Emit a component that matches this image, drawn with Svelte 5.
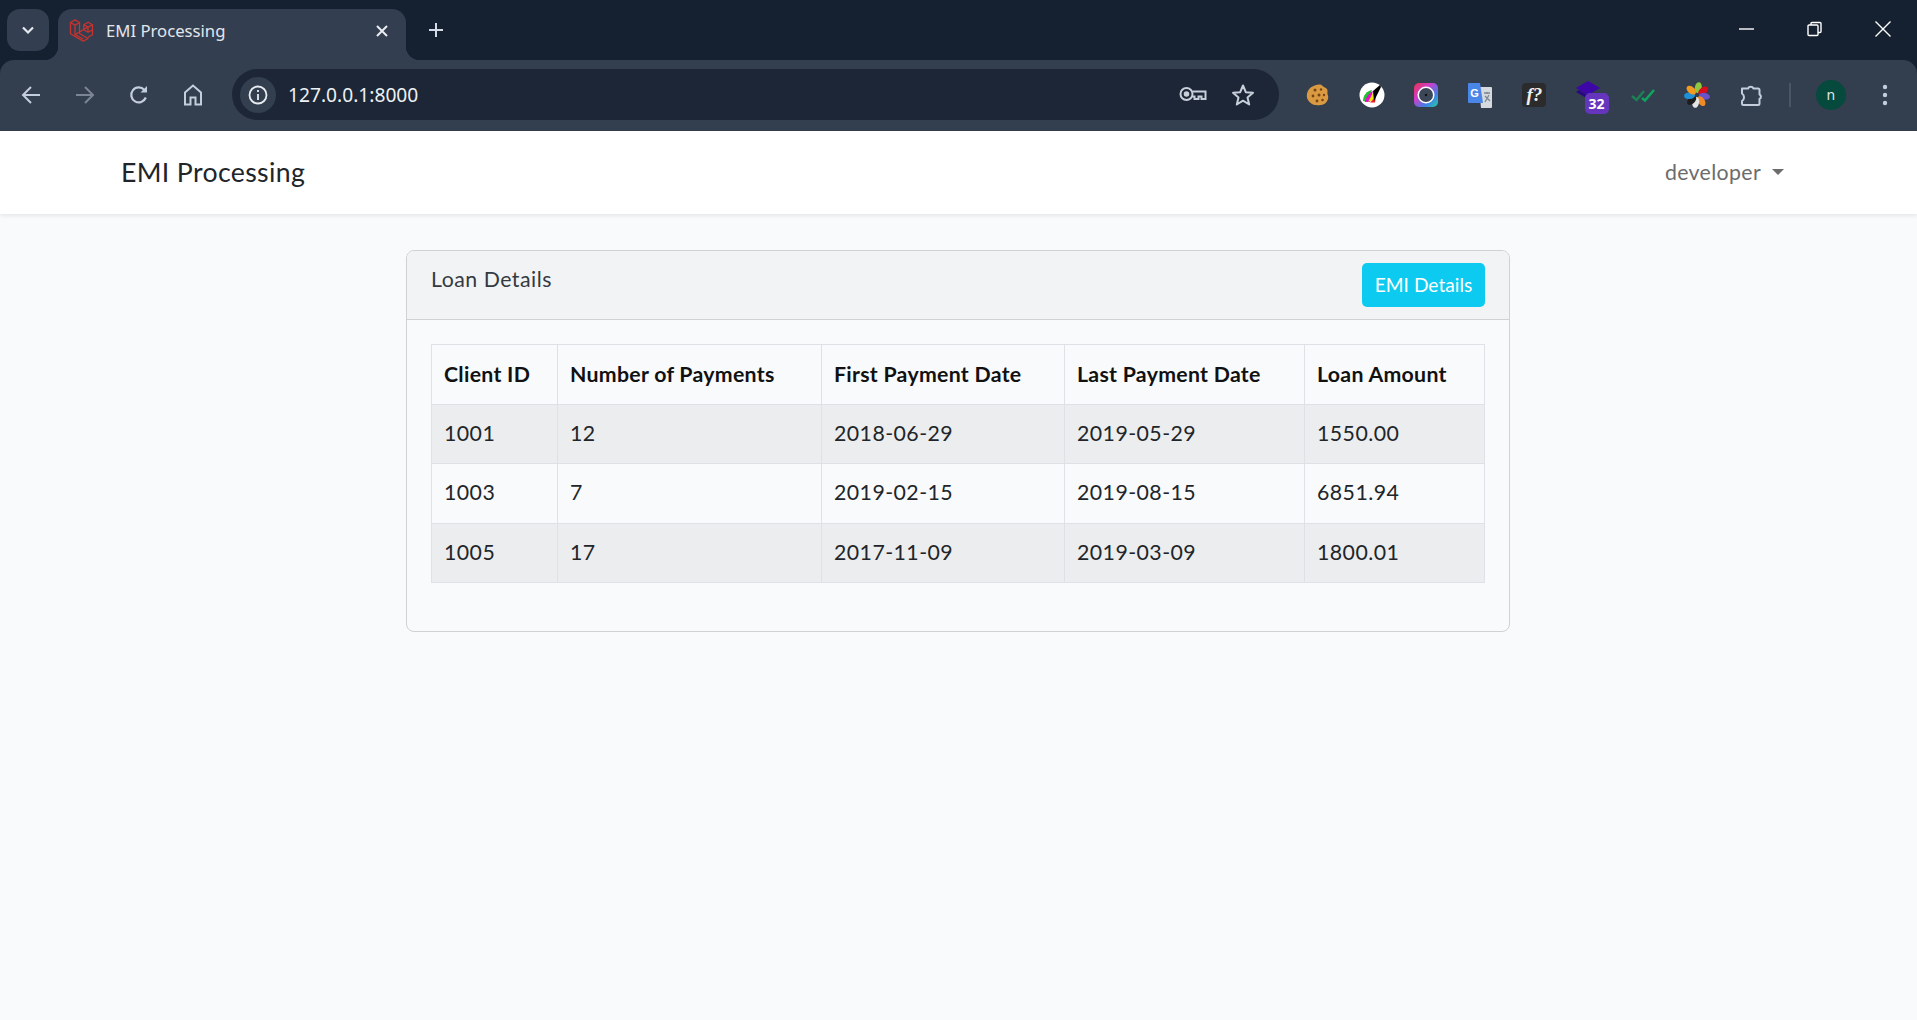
<script>
  let columns = ["Client ID", "Number of Payments", "First Payment Date", "Last Payment Date", "Loan Amount"]
  let loans = [
    ["1001", "12", "2018-06-29", "2019-05-29", "1550.00"],
    ["1003", "7", "2019-02-15", "2019-08-15", "6851.94"],
    ["1005", "17", "2017-11-09", "2019-03-09", "1800.01"]
  ]
</script>

<div class="page">
  <div class="browser">
    <div class="tabstrip">
      <button class="tabsearch" aria-label="Search tabs">
        <svg width="16" height="16" viewBox="0 0 16 16"><path d="M3 5.500l5 5 5-5" fill="none" stroke="#e6eaf0" stroke-width="2.200"/></svg>
      </button>
      <div class="tab">
        <svg class="favicon" width="26" height="26" viewBox="0 0 26 26" fill="none" stroke="#c8332e" stroke-width="1.300" stroke-linejoin="round">
          <path d="M1.500 5.500l4.500-2.600 4.500 2.600v11l8.500 5-4.700 2.700-8.300-4.800-4.500-2.600z"/>
          <path d="M1.500 5.500l4.500 2.600 4.500-2.600M6 8.100v9.400l8.300 4.800M6 17.500l8.800-5 4.200-2.400"/>
          <path d="M14.800 7.700l4.300-2.500 4.400 2.500v5l-4.500 2.500-4.200-2.400zM14.800 7.700l4.200 2.400 4.500-2.400M19 10.100v5.100M23.500 12.700v5l-4.500 2.600"/>
        </svg>
        <span class="tabtitle">EMI Processing</span>
        <svg class="tabclose" width="14" height="14" viewBox="0 0 14 14"><path d="M2 2l10 10M12 2L2 12" stroke="#e9edf2" stroke-width="2"/></svg>
      </div>
      <svg class="newtab" width="16" height="16" viewBox="0 0 16 16"><path d="M8 1v14M1 8h14" stroke="#d5dbe4" stroke-width="2"/></svg>
      <div class="winctl">
        <svg width="16" height="16" viewBox="0 0 16 16"><path d="M0 8h15" stroke="#fff" stroke-width="1.400"/></svg>
        <svg width="16" height="16" viewBox="0 0 16 16" fill="none" stroke="#fff" stroke-width="1.400"><rect x="1" y="4" width="10" height="10.500" rx="1"/><path d="M4 4V2.500q0-1 1-1h8q1 0 1 1v8q0 1-1 1h-2"/></svg>
        <svg width="16" height="16" viewBox="0 0 16 16"><path d="M.5.5l15 15M15.500.5l-15 15" stroke="#fff" stroke-width="1.400"/></svg>
      </div>
    </div>

    <div class="toolbar">
      <div class="navbtns">
        <svg width="20" height="20" viewBox="0 0 20 20" fill="none" stroke="#c3cddb" stroke-width="2"><path d="M19 10H2M10 2l-8 8 8 8"/></svg>
        <svg width="20" height="20" viewBox="0 0 20 20" fill="none" stroke="#7b8593" stroke-width="2"><path d="M1 10h17M10 2l8 8-8 8"/></svg>
        <svg width="20" height="20" viewBox="0 0 20 20" fill="none" stroke="#c3cddb" stroke-width="2.200"><path d="M16.800 12.500a7.500 7.500 0 1 1-1.400-7.600"/><path d="M18 1v6.500h-6.500z" fill="#c3cddb" stroke="none"/></svg>
        <svg width="20" height="22" viewBox="0 0 20 22" fill="none" stroke="#c3cddb" stroke-width="2"><path d="M2 20.500V8.500L10 1.500l8 7v12h-5.500v-7h-5v7z"/></svg>
      </div>
      <div class="omnibox">
        <div class="siteinfo">
          <svg width="20" height="20" viewBox="0 0 20 20" fill="none" stroke="#e8ecf1" stroke-width="1.800"><circle cx="10" cy="10" r="8.500"/><path d="M10 9v6M10 5v2"/></svg>
        </div>
        <span class="url">127.0.0.1:8000</span>
        <svg class="key" width="28" height="18" viewBox="0 0 28 18" fill="none" stroke="#c7cfda" stroke-width="2"><circle cx="7.500" cy="8" r="6"/><circle cx="7.500" cy="8" r="1.800" fill="#c7cfda"/><path d="M13.500 5.500H26.500v7.500h-4v-2.500h-3V13h-4v-2.500h-2"/></svg>
        <svg class="star" width="24" height="24" viewBox="0 0 24 24" fill="none" stroke="#c7cfda" stroke-width="2" stroke-linejoin="round"><path d="M12 2.500l2.800 6.700 7.200.6-5.500 4.700 1.700 7-6.200-3.800-6.200 3.800 1.700-7L2 9.800l7.200-.6z"/></svg>
      </div>

      <div class="extensions">
        <svg width="24" height="24" viewBox="0 0 24 24"><path d="M13 1.500c3-.5 3 1.500 5 2.500s4 2 3.500 5 1.500 4 .5 7-3 5.500-7 6-8 .5-11-2.500S0 13.500 1.500 9 8 2 13 1.500z" fill="#d99a42"/><g fill="#7a4314"><circle cx="9" cy="7" r="1.500"/><circle cx="15" cy="6.500" r="1.200"/><circle cx="7" cy="13" r="1.400"/><circle cx="13" cy="12" r="1.500"/><circle cx="18" cy="12" r="1.200"/><circle cx="11" cy="18" r="1.400"/><circle cx="16.500" cy="17" r="1.300"/></g></svg>
        <svg width="26" height="26" viewBox="0 0 26 26"><circle cx="13" cy="13" r="12.500" fill="#fff"/><path d="M4 19c0-6 4-10 9-11l-5 12z" fill="#1fc12e"/><path d="M6 20c1-5 4-9 8-11l-3 11z" fill="#e60cd0"/><path d="M9 20l6-11 1 8z" fill="#f2e400"/><path d="M11 20.500l6-6-1 6z" fill="#e82020"/><path d="M14 9l7-6 1 2-4 8-3 6z" fill="#000"/></svg>
        <svg width="24" height="24" viewBox="0 0 24 24"><defs><linearGradient id="ring" x1="0" y1="0" x2="1" y2="1"><stop offset="0" stop-color="#e8344e"/><stop offset=".35" stop-color="#d13cc8"/><stop offset=".7" stop-color="#3f7fe8"/><stop offset="1" stop-color="#25d0a0"/></linearGradient></defs><rect width="24" height="24" rx="5" fill="url(#ring)"/><circle cx="12" cy="12" r="8.500" fill="#fff"/><circle cx="12" cy="12" r="7" fill="#3b4656"/><circle cx="12" cy="12" r="1.200" fill="#111"/></svg>
        <svg width="26" height="26" viewBox="0 0 26 26"><path d="M12 5h12q1 0 1 1v19q0 1-1 1H14z" fill="#d6dade"/><path d="M17 11h6M20 10v2M18 20l4-7M18 14l5 5" stroke="#7d8791" stroke-width="1.300" fill="none"/><path d="M2 1h11l3 20H2q-1 0-1-1V2q0-1 1-1z" fill="#4a86e8"/><text x="7.500" y="15" font-size="11" font-weight="700" fill="#fff" text-anchor="middle" font-family="'Liberation Sans', sans-serif">G</text></svg>
        <div class="fq"><span>f?</span></div>
        <div class="badged">
          <svg width="26" height="24" viewBox="0 0 26 24"><path d="M12 0l12 7-12 7L0 7z" fill="#3d07a8"/><path d="M3 9L0 11l12 7 3-2z" fill="#2a0880"/></svg>
          <span class="badge">32</span>
        </div>
        <svg width="24" height="16" viewBox="0 0 24 16" fill="none" stroke-width="2.600"><path d="M1 9l4.500 4L13 4" stroke="#1e7f55"/><path d="M11 11l3 2.500L23 3" stroke="#0fa45e"/></svg>
        <svg width="26" height="26" viewBox="0 0 26 26">
          <g transform="translate(13 13)">
            <ellipse cx="0" cy="-7.500" rx="3.400" ry="5.500" fill="#8fc63e" transform="rotate(10)"/>
            <ellipse cx="0" cy="-7.500" rx="3.400" ry="5.500" fill="#d80f18" transform="rotate(55)"/>
            <ellipse cx="0" cy="-7.500" rx="3.400" ry="5.500" fill="#6a52c8" transform="rotate(100)"/>
            <ellipse cx="0" cy="-7.500" rx="3.400" ry="5.500" fill="#f08a24" transform="rotate(145)"/>
            <ellipse cx="0" cy="-7.500" rx="3.400" ry="5.500" fill="#e4e4e4" transform="rotate(190)"/>
            <ellipse cx="0" cy="-7.500" rx="3.400" ry="5.500" fill="#1d1d1d" transform="rotate(225)"/>
            <ellipse cx="0" cy="-7.500" rx="3.400" ry="5.500" fill="#1f8fd8" transform="rotate(265)"/>
            <ellipse cx="0" cy="-7.500" rx="3.400" ry="5.500" fill="#f29a1f" transform="rotate(310)"/>
          </g>
        </svg>
        <svg width="24" height="24" viewBox="0 0 24 24" fill="none" stroke="#c3cddb" stroke-width="2" stroke-linejoin="round"><path d="M3 5.500h6a3 3 0 0 1 5.500 0H19a1.500 1.500 0 0 1 1.500 1.500v4.500a2.500 2.500 0 0 1 0 4.500V20.500a1.500 1.500 0 0 1-1.500 1.500H4.500A1.500 1.500 0 0 1 3 20.500V18a4.500 4.500 0 0 0 0-7.500z"/></svg>
      </div>
      <div class="divider"></div>
      <div class="avatar">n</div>
      <svg class="menu" width="6" height="22" viewBox="0 0 6 22" fill="#c3cddb"><circle cx="3" cy="3" r="2.200"/><circle cx="3" cy="11" r="2.200"/><circle cx="3" cy="19" r="2.200"/></svg>
    </div>
  </div>

  <nav class="navbar">
    <span class="brand">EMI Processing</span>
    <span class="user">developer<i class="caret"></i></span>
  </nav>

  <main>
    <div class="card">
      <div class="card-header">
        <span class="card-title">Loan Details</span>
        <button class="btn-info">EMI Details</button>
      </div>
      <div class="card-body">
        <table>
          <colgroup>
            <col style="width:126px" />
            <col style="width:264px" />
            <col style="width:243px" />
            <col style="width:240px" />
            <col />
          </colgroup>
          <thead>
            <tr>
              {#each columns as col}
                <th>{col}</th>
              {/each}
            </tr>
          </thead>
          <tbody>
            {#each loans as row}
              <tr>
                {#each row as cell}
                  <td>{cell}</td>
                {/each}
              </tr>
            {/each}
          </tbody>
        </table>
      </div>
    </div>
  </main>
</div>

<style>
  :global(body) {
    margin: 0;
    background: #f8fafc;
  }

  .page {
    height: 1020px;
    overflow: hidden;
    background: #f8fafc;
    font-family: Lato, "Noto Sans", sans-serif;
  }

  .browser {
    background: #152130;
    height: 131px;
    font-family: "Noto Sans", sans-serif;
  }

  .tabstrip {
    display: flex;
    align-items: flex-start;
    height: 60px;
    padding-left: 7px;
    box-sizing: border-box;
    color: #e4e8ee;
  }

  .tabsearch {
    width: 42px;
    height: 42px;
    margin-top: 9px;
    padding: 0;
    border: 0;
    border-radius: 13px;
    background: #333f50;
    display: flex;
    align-items: center;
    justify-content: center;
  }

  .tab {
    width: 348px;
    height: 51px;
    margin: 9px 0 0 9px;
    padding: 0 17px 8px 11px;
    box-sizing: border-box;
    background: #333f50;
    border-radius: 14px 14px 0 0;
    display: flex;
    align-items: center;
    position: relative;
  }

  .tab::before,
  .tab::after {
    content: "";
    position: absolute;
    bottom: 0;
    width: 14px;
    height: 14px;
  }

  .tab::before {
    left: -14px;
    background: radial-gradient(circle at 0 0, transparent 14px, #333f50 14.500px);
  }

  .tab::after {
    right: -14px;
    background: radial-gradient(circle at 100% 0, transparent 14px, #333f50 14.500px);
  }

  .favicon {
    flex: none;
    margin-top: -2px;
  }

  .tabtitle {
    margin-left: 11px;
    font-size: 16.700px;
    flex: 1;
    color: #e2e6ec;
  }

  .newtab {
    margin: 22px 0 0 22px;
  }

  .winctl {
    margin-left: auto;
    margin-top: 21px;
    padding-right: 26px;
    display: flex;
    gap: 52px;
    align-items: center;
  }

  .toolbar {
    height: 69px;
    background: #333e4f;
    border-radius: 14px 14px 0 0;
    display: flex;
    align-items: center;
    padding-bottom: 2px;
    position: relative;
  }

  .navbtns {
    display: flex;
    align-items: center;
    gap: 34px;
    padding-left: 21px;
    width: 232px;
    box-sizing: border-box;
    flex: none;
  }

  .omnibox {
    width: 1047px;
    height: 51px;
    background: #1c2636;
    border-radius: 26px;
    display: flex;
    align-items: center;
    padding-left: 8px;
    box-sizing: border-box;
    flex: none;
  }

  .siteinfo {
    width: 36px;
    height: 36px;
    border-radius: 50%;
    background: #333e4f;
    display: flex;
    align-items: center;
    justify-content: center;
  }

  .url {
    margin-left: 12px;
    font-size: 19.200px;
    color: #eef1f5;
    flex: 1;
  }

  .key {
    margin-right: 24px;
  }

  .star {
    margin-right: 24px;
  }

  .extensions {
    margin-left: 12px;
    flex: none;
    display: grid;
    grid-template-columns: repeat(9, 54.100px);
    justify-items: center;
    align-items: center;
  }

  .fq {
    width: 24px;
    height: 24px;
    border-radius: 4px;
    background: #2b2b2b;
    color: #f0f0f0;
    font-family: "Liberation Serif", serif;
    font-style: italic;
    font-weight: 700;
    font-size: 19px;
    line-height: 24px;
    text-align: center;
  }

  .badged {
    position: relative;
    width: 26px;
    height: 24px;
    margin-top: -4px;
  }

  .badge {
    position: absolute;
    left: 9px;
    top: 12px;
    width: 24px;
    height: 21px;
    border-radius: 5px;
    background: #6536bd;
    color: #fff;
    font-size: 14px;
    font-weight: 700;
    line-height: 21px;
    text-align: center;
  }

  .divider {
    width: 2px;
    height: 24px;
    margin-left: 11px;
    background: #4a5566;
    flex: none;
  }

  .avatar {
    width: 30px;
    height: 30px;
    margin-left: 25px;
    border-radius: 50%;
    background: #054a3c;
    color: #dfe8e4;
    font-size: 14px;
    line-height: 30px;
    text-align: center;
    flex: none;
  }

  .menu {
    margin-left: 36px;
    flex: none;
  }

  .navbar {
    height: 83px;
    padding: 0 133px 0 121px;
    background: #fff;
    box-shadow: 0 2px 4px rgba(0, 0, 0, 0.08);
    display: flex;
    align-items: center;
    justify-content: space-between;
    position: relative;
  }

  .brand {
    font-size: 26.670px;
    letter-spacing: 0.350px;
    color: #212529;
    margin-top: -2px;
  }

  .user {
    font-size: 21.300px;
    letter-spacing: 0.350px;
    color: #6c6c6c;
    display: flex;
    align-items: center;
    margin-top: -2px;
  }

  .caret {
    margin-left: 11px;
    border-top: 6px solid #6c6c6c;
    border-left: 6px solid transparent;
    border-right: 6px solid transparent;
  }

  main {
    padding-top: 36px;
    display: flex;
    justify-content: center;
  }

  .card {
    width: 1104px;
    margin-left: -1px;
    box-sizing: border-box;
    border: 1px solid #cfd1d4;
    border-radius: 8px;
    overflow: hidden;
  }

  .card-header {
    height: 69px;
    box-sizing: border-box;
    padding: 12px 24px;
    background: #f2f3f5;
    border-bottom: 1px solid #cfd1d4;
    display: flex;
    justify-content: space-between;
    align-items: flex-start;
  }

  .card-title {
    font-size: 21.300px;
    letter-spacing: 0.500px;
    line-height: 32px;
    color: #343a40;
  }

  .btn-info {
    width: 123px;
    height: 44px;
    padding: 0 0 2px;
    border: 0;
    border-radius: 5px;
    background: #0dcaf0;
    color: #fff;
    font: inherit;
    font-size: 19.200px;
  }

  .card-body {
    padding: 24px 24px 48px;
  }

  table {
    width: 1054px;
    table-layout: fixed;
    border-collapse: collapse;
    font-size: 21.300px;
    color: #212529;
  }

  th,
  td {
    border: 1px solid #dee2e6;
    height: 59.500px;
    padding: 0 12px;
    box-sizing: border-box;
    text-align: left;
  }

  th {
    font-weight: 700;
    letter-spacing: 0.280px;
    color: #111;
  }

  td {
    letter-spacing: 0.450px;
    padding-bottom: 2px;
  }

  tbody tr:nth-child(odd) {
    background: #ecedef;
  }
</style>
